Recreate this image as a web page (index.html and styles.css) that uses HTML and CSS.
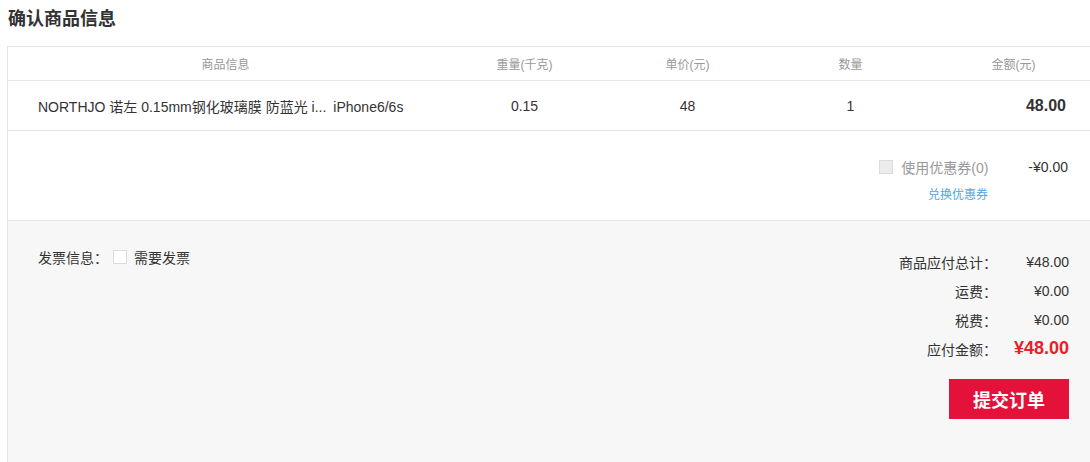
FILE: index.html
```html
<!DOCTYPE html>
<html lang="zh">
<head>
<meta charset="utf-8">
<title>确认商品信息</title>
<link rel="stylesheet" href="styles.css">
</head>
<body>
<div class="page">
  <h2 class="title">确认商品信息</h2>
  <div class="box">
    <div class="row head">
      <div class="c-name">商品信息</div>
      <div class="c-col">重量(千克)</div>
      <div class="c-col">单价(元)</div>
      <div class="c-col">数量</div>
      <div class="c-col">金额(元)</div>
    </div>
    <div class="row item">
      <div class="c-name left"><span class="pname">NORTHJO 诺左 0.15mm钢化玻璃膜 防蓝光 i...</span><span class="spec">iPhone6/6s</span></div>
      <div class="c-col">0.15</div>
      <div class="c-col">48</div>
      <div class="c-col">1</div>
      <div class="c-col amount">48.00</div>
    </div>
    <div class="coupon">
      <div class="coupon-line">
        <span class="cbox disabled"></span>
        <span class="coupon-label">使用优惠券(0)</span>
        <span class="coupon-val">-¥0.00</span>
      </div>
      <a class="exchange">兑换优惠券</a>
    </div>
    <div class="summary">
      <div class="invoice">
        <span>发票信息：</span>
        <span class="cbox"></span>
        <span>需要发票</span>
      </div>
      <div class="totals">
        <div class="trow"><span class="tl">商品应付总计：</span><span class="tv">¥48.00</span></div>
        <div class="trow"><span class="tl">运费：</span><span class="tv">¥0.00</span></div>
        <div class="trow"><span class="tl">税费：</span><span class="tv">¥0.00</span></div>
        <div class="trow"><span class="tl">应付金额：</span><span class="tv pay">¥48.00</span></div>
        <button class="submit">提交订单</button>
      </div>
    </div>
  </div>
</div>
</body>
</html>
```

FILE: styles.css
```css
* { box-sizing: border-box; }
html, body { margin: 0; padding: 0; background: #fff; overflow: hidden; }
body {
  font-family: "Liberation Sans", Arial, "Noto Sans CJK SC", sans-serif;
  color: #333;
  font-size: 14px;
}
.page { padding: 7px 0 0 7px; width: 1090px; overflow: hidden; }
.title {
  margin: 0 0 0 1px;
  font-size: 18px;
  font-weight: bold;
  line-height: 24px;
  color: #333;
  height: 39px;
}
.box {
  width: 1090px;
  border: 1px solid #e6e6e6;
  border-right: none;
  border-bottom: none;
}
.row { display: flex; align-items: center; border-bottom: 1px solid #e6e6e6; }
.head { height: 34px; font-size: 12px; color: #999; }
.item { height: 50px; font-size: 14px; color: #333; }
.c-name { width: 435px; text-align: center; }
.c-name.left { text-align: left; padding-left: 30px; white-space: nowrap; }
.pname { margin-right: 7px; }
.c-col { width: 163px; text-align: center; }
.amount { text-align: right; padding-right: 29px; font-weight: bold; font-size: 16px; }

.coupon {
  height: 90px;
  border-bottom: 1px solid #e6e6e6;
  display: flex;
  flex-direction: column;
  align-items: flex-end;
  padding: 26px 0 0 0;
}
.coupon-line { display: flex; align-items: center; height: 20px; margin-right: 29px; }
.cbox {
  display: inline-block;
  width: 14px; height: 14px;
  border: 1px solid #ddd;
  background: #fff;
}
.cbox.disabled { background: #ececec; border-color: #dcdcdc; }
.coupon-label { color: #999; font-size: 14px; margin-left: 8px; width: 127px; }
.coupon-val { color: #333; font-size: 14px; }
.exchange {
  color: #4aa8ec;
  font-size: 12px;
  margin-right: 109px;
  margin-top: 8px;
  cursor: pointer;
}

.summary {
  background: #f7f7f7;
  height: 260px;
  display: flex;
  justify-content: space-between;
  padding: 26px 28px 0 30px;
}
.invoice { display: flex; align-items: center; height: 20px; }
.invoice .cbox { margin: 0 7px 0 5px; }
.totals { display: flex; flex-direction: column; align-items: flex-end; }
.trow { display: flex; align-items: center; height: 29px; font-size: 14px; }
.tl { text-align: right; }
.tv { width: 72px; text-align: right; }
.tv.pay { color: #e6212a; font-weight: bold; font-size: 18px; }
.submit {
  margin-top: 16px;
  width: 120px; height: 40px;
  border: none;
  background: #e4123a;
  color: #fff;
  font-family: "Liberation Sans", Arial, "Noto Sans CJK SC", sans-serif;
  font-size: 18px;
  font-weight: bold;
  cursor: pointer;
}
```
